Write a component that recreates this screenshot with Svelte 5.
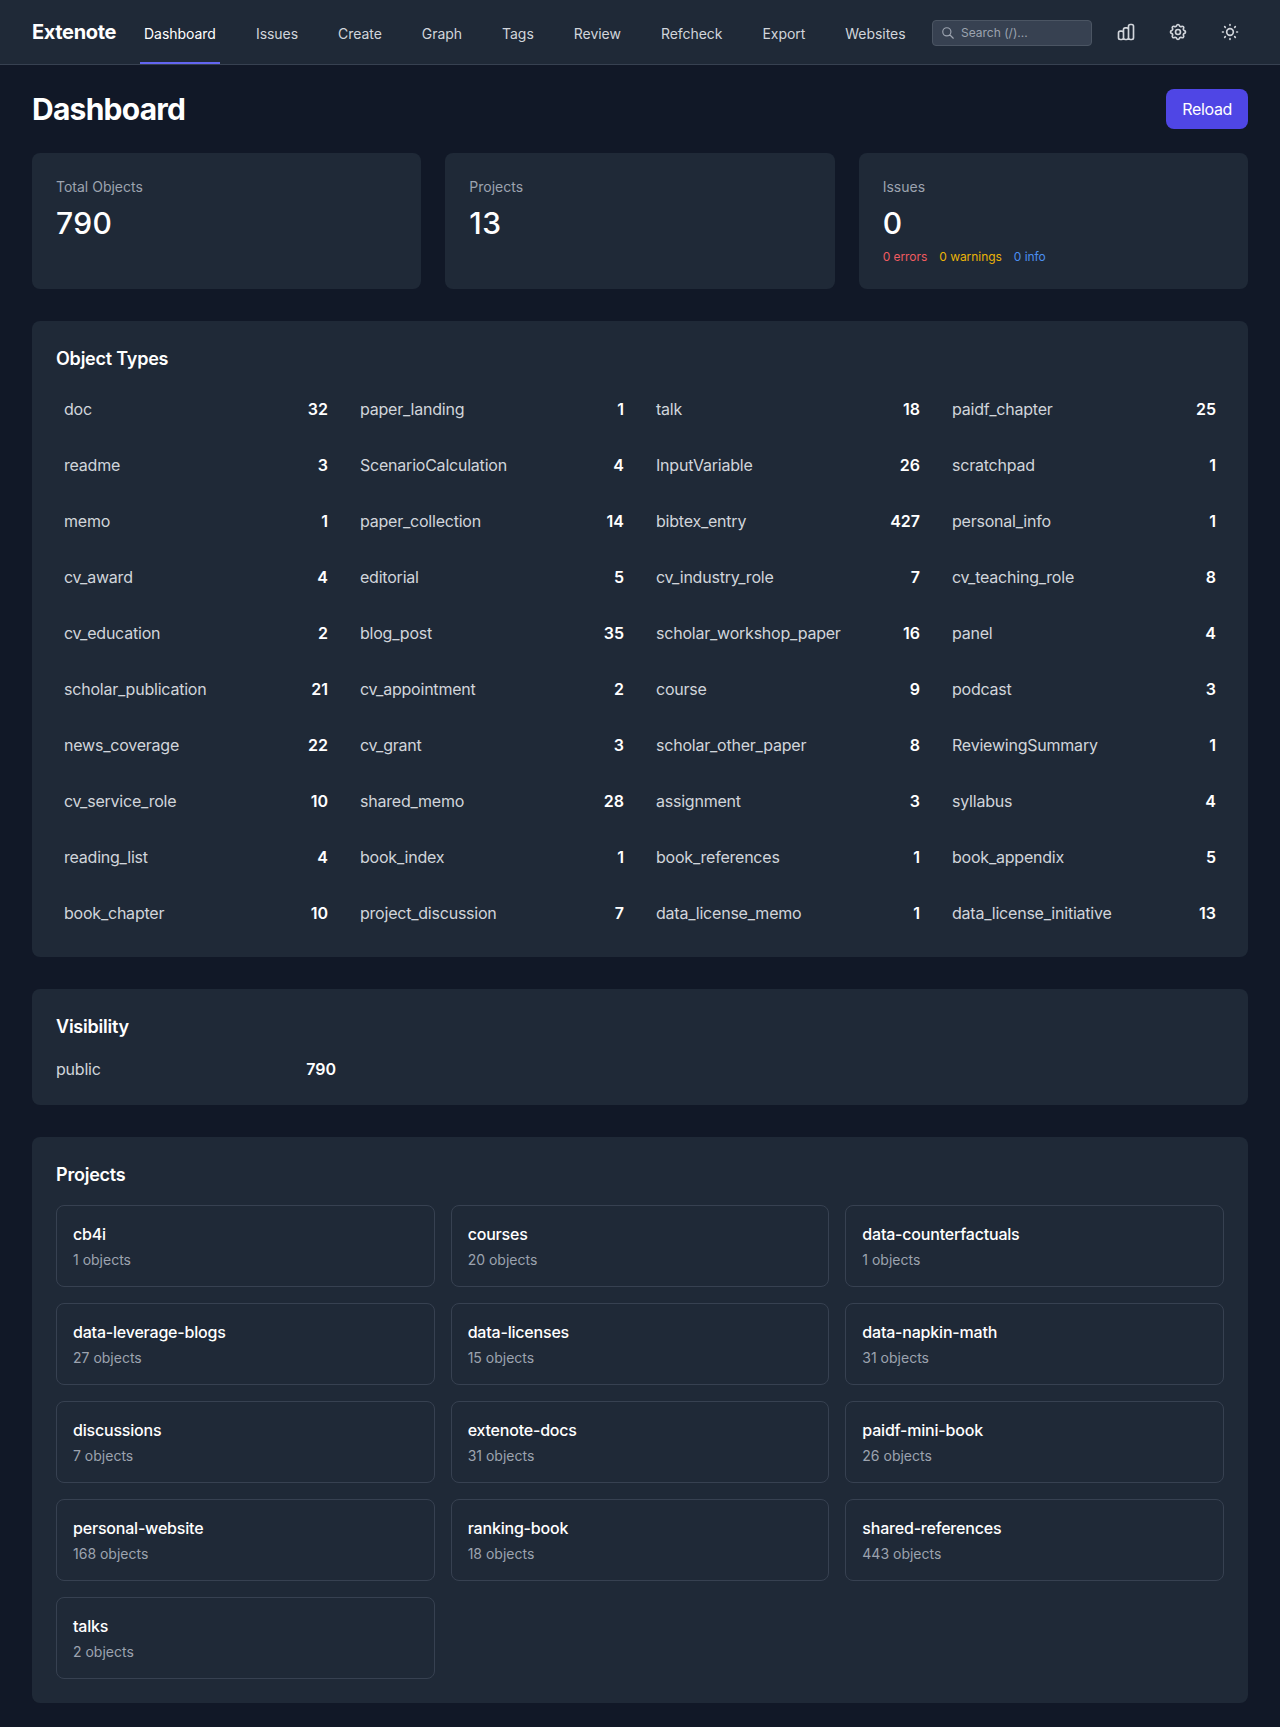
<script lang="ts">
	const nav = ['Dashboard', 'Issues', 'Create', 'Graph', 'Tags', 'Review', 'Refcheck', 'Export', 'Websites'];

	const types: [string, number][] = [
		['doc', 32], ['paper_landing', 1], ['talk', 18], ['paidf_chapter', 25],
		['readme', 3], ['ScenarioCalculation', 4], ['InputVariable', 26], ['scratchpad', 1],
		['memo', 1], ['paper_collection', 14], ['bibtex_entry', 427], ['personal_info', 1],
		['cv_award', 4], ['editorial', 5], ['cv_industry_role', 7], ['cv_teaching_role', 8],
		['cv_education', 2], ['blog_post', 35], ['scholar_workshop_paper', 16], ['panel', 4],
		['scholar_publication', 21], ['cv_appointment', 2], ['course', 9], ['podcast', 3],
		['news_coverage', 22], ['cv_grant', 3], ['scholar_other_paper', 8], ['ReviewingSummary', 1],
		['cv_service_role', 10], ['shared_memo', 28], ['assignment', 3], ['syllabus', 4],
		['reading_list', 4], ['book_index', 1], ['book_references', 1], ['book_appendix', 5],
		['book_chapter', 10], ['project_discussion', 7], ['data_license_memo', 1], ['data_license_initiative', 13],
	];

	const projects: [string, number][] = [
		['cb4i', 1], ['courses', 20], ['data-counterfactuals', 1],
		['data-leverage-blogs', 27], ['data-licenses', 15], ['data-napkin-math', 31],
		['discussions', 7], ['extenote-docs', 31], ['paidf-mini-book', 26],
		['personal-website', 168], ['ranking-book', 18], ['shared-references', 443],
		['talks', 2],
	];
</script>

<header class="topbar">
	<span class="logo">Extenote</span>
	<nav class="nav">
		{#each nav as item, i}
			<a href="#top" class="nav-link" class:active={i === 0}>{item}</a>
		{/each}
	</nav>
	<label class="search">
		<svg class="search-icon" viewBox="0 0 24 24" fill="none" stroke="currentColor" stroke-width="2" stroke-linecap="round" stroke-linejoin="round">
			<path d="M21 21l-6-6m2-5a7 7 0 11-14 0 7 7 0 0114 0z" />
		</svg>
		<input type="text" placeholder="Search (/)..." />
	</label>
	<div class="actions">
		<button class="icon-btn" aria-label="Stats">
			<svg viewBox="0 0 24 24" fill="none" stroke="currentColor" stroke-width="2" stroke-linecap="round" stroke-linejoin="round">
				<path d="M9 19v-6a2 2 0 00-2-2H5a2 2 0 00-2 2v6a2 2 0 002 2h2a2 2 0 002-2zm0 0V9a2 2 0 012-2h2a2 2 0 012 2v10m-6 0a2 2 0 002 2h2a2 2 0 002-2m0 0V5a2 2 0 012-2h2a2 2 0 012 2v14a2 2 0 01-2 2h-2a2 2 0 01-2-2z" />
			</svg>
		</button>
		<button class="icon-btn" aria-label="Settings">
			<svg viewBox="0 0 24 24" fill="none" stroke="currentColor" stroke-width="2" stroke-linecap="round" stroke-linejoin="round">
				<path d="M10.325 4.317c.426-1.756 2.924-1.756 3.35 0a1.724 1.724 0 002.573 1.066c1.543-.94 3.31.826 2.37 2.37a1.724 1.724 0 001.065 2.572c1.756.426 1.756 2.924 0 3.35a1.724 1.724 0 00-1.066 2.573c.94 1.543-.826 3.31-2.37 2.37a1.724 1.724 0 00-2.572 1.065c-.426 1.756-2.924 1.756-3.35 0a1.724 1.724 0 00-2.573-1.066c-1.543.94-3.31-.826-2.37-2.37a1.724 1.724 0 00-1.065-2.572c-1.756-.426-1.756-2.924 0-3.35a1.724 1.724 0 001.066-2.573c-.94-1.543.826-3.31 2.37-2.37.996.608 2.296.07 2.572-1.065z" />
				<path d="M15 12a3 3 0 11-6 0 3 3 0 016 0z" />
			</svg>
		</button>
		<button class="icon-btn" aria-label="Theme">
			<svg viewBox="0 0 24 24" fill="none" stroke="currentColor" stroke-width="2" stroke-linecap="round" stroke-linejoin="round">
				<path d="M12 3v1m0 16v1m9-9h-1M4 12H3m15.364 6.364l-.707-.707M6.343 6.343l-.707-.707m12.728 0l-.707.707M6.343 17.657l-.707.707M16 12a4 4 0 11-8 0 4 4 0 018 0z" />
			</svg>
		</button>
	</div>
</header>

<main class="page">
	<div class="page-head">
		<h1>Dashboard</h1>
		<button class="reload">Reload</button>
	</div>

	<div class="stats">
		<section class="card stat">
			<div class="stat-label">Total Objects</div>
			<div class="stat-value">790</div>
		</section>
		<section class="card stat">
			<div class="stat-label">Projects</div>
			<div class="stat-value">13</div>
		</section>
		<section class="card stat">
			<div class="stat-label">Issues</div>
			<div class="stat-value">0</div>
			<div class="stat-sub">
				<span class="err">0 errors</span>
				<span class="warn">0 warnings</span>
				<span class="info">0 info</span>
			</div>
		</section>
	</div>

	<section class="card">
		<h2>Object Types</h2>
		<div class="type-grid">
			{#each types as [name, count]}
				<div class="type-row">
					<span class="type-name">{name}</span>
					<span class="count">{count}</span>
				</div>
			{/each}
		</div>
	</section>

	<section class="card">
		<h2>Visibility</h2>
		<div class="vis-grid">
			<div class="vis-row">
				<span class="type-name">public</span>
				<span class="count">790</span>
			</div>
		</div>
	</section>

	<section class="card">
		<h2>Projects</h2>
		<div class="project-grid">
			{#each projects as [name, count]}
				<div class="project">
					<div class="project-name">{name}</div>
					<div class="project-count">{count} objects</div>
				</div>
			{/each}
		</div>
	</section>
</main>

<style>
	:global(body) {
		background: #111827;
		color: #f9fafb;
		font-family: Inter, "Liberation Sans", sans-serif;
	}

	.topbar {
		display: flex;
		align-items: center;
		height: 64px;
		padding: 0 32px;
		background: #1f2937;
		border-bottom: 1px solid #374151;
	}

	.logo {
		font-size: 20px;
		font-weight: 700;
		letter-spacing: -0.35px;
		color: #fff;
		margin-right: 24px;
	}

	.nav {
		display: flex;
		gap: 32px;
		height: 64px;
	}

	.nav-link {
		display: flex;
		align-items: center;
		padding: 4px 4px 0;
		font-size: 14px;
		font-weight: 400;
		letter-spacing: -0.04px;
		color: #d1d5db;
		text-decoration: none;
		border-bottom: 2px solid transparent;
		box-sizing: border-box;
	}

	.nav-link.active {
		color: #fff;
		border-bottom-color: #6366f1;
	}

	.search {
		position: relative;
		display: block;
		width: 160px;
		margin: 2px 0 0 auto;
	}

	.search-icon {
		position: absolute;
		left: 9px;
		top: 6px;
		width: 14px;
		height: 14px;
		color: #9ca3af;
	}

	.search input {
		display: block;
		width: 100%;
		height: 26px;
		box-sizing: border-box;
		padding: 0 8px 2px 28px;
		background: #374151;
		border: 1px solid #4b5563;
		border-radius: 4px;
		color: #fff;
		font: 12px Inter, sans-serif;
		outline: none;
	}

	.search input::placeholder {
		color: #9ca3af;
		opacity: 1;
	}

	.actions {
		display: flex;
		gap: 16px;
		margin-left: 16px;
	}

	.icon-btn {
		width: 36px;
		height: 36px;
		padding: 8px;
		background: none;
		border: none;
		color: #d1d5db;
	}

	.icon-btn svg {
		display: block;
		width: 20px;
		height: 20px;
	}

	.page {
		display: flex;
		flex-direction: column;
		gap: 32px;
		padding: 24px 32px;
	}

	.page-head {
		display: flex;
		justify-content: space-between;
		align-items: center;
		margin-bottom: -8px;
	}

	h1 {
		margin: 0;
		font-size: 30px;
		line-height: 36px;
		font-weight: 650;
		letter-spacing: -0.75px;
		color: #fff;
	}

	.reload {
		height: 40px;
		padding: 0 16px;
		background: #4f46e5;
		border: none;
		border-radius: 8px;
		color: #fff;
		font: 400 16px/24px Inter, sans-serif;
		letter-spacing: -0.35px;
	}

	.stats {
		display: grid;
		grid-template-columns: repeat(3, minmax(0, 1fr));
		gap: 24px;
	}

	.card {
		padding: 24px;
		background: #1f2937;
		border-radius: 8px;
	}

	.stat-label {
		font-size: 14px;
		line-height: 20px;
		color: #9ca3af;
	}

	.stat-value {
		margin-top: 8px;
		font-size: 30px;
		line-height: 36px;
		font-weight: 550;
		letter-spacing: 0.4px;
		color: #fff;
	}

	.stat-sub {
		display: flex;
		gap: 12px;
		min-height: 16px;
		margin-top: 8px;
		font-size: 12px;
		line-height: 16px;
		letter-spacing: -0.05px;
	}

	.err { color: #ef5b60; }
	.warn { color: #eab308; }
	.info { color: #4b8ff0; }

	h2 {
		margin: 0 0 16px;
		font-size: 18px;
		line-height: 28px;
		font-weight: 570;
		letter-spacing: -0.22px;
		color: #fff;
	}

	.type-grid,
	.vis-grid {
		display: grid;
		grid-template-columns: repeat(4, minmax(0, 1fr));
		gap: 16px;
	}

	.type-row,
	.vis-row {
		display: flex;
		justify-content: space-between;
		line-height: 24px;
	}

	.type-row {
		padding: 8px;
	}

	.type-name {
		color: #d1d5db;
		letter-spacing: -0.22px;
	}

	.count {
		font-weight: 600;
		color: #fff;
	}

	.project-grid {
		display: grid;
		grid-template-columns: repeat(3, minmax(0, 1fr));
		gap: 16px;
	}

	.project {
		padding: 16px;
		border: 1px solid #374151;
		border-radius: 8px;
	}

	.project-name {
		font-weight: 450;
		letter-spacing: -0.2px;
		line-height: 24px;
		color: #fff;
	}

	.project-count {
		margin-top: 4px;
		font-size: 14px;
		line-height: 20px;
		color: #9ca3af;
	}
</style>
